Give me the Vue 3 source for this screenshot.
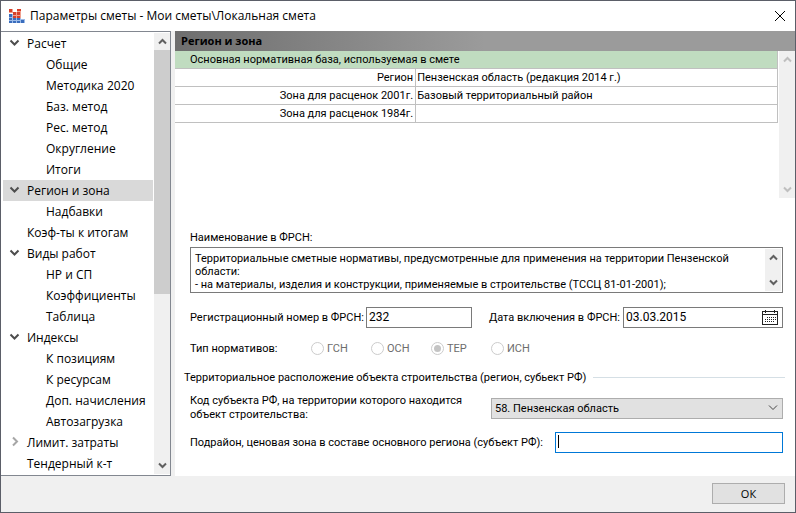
<script setup>
import { ref } from 'vue'

const tree = [
  { text: 'Расчет', level: 0, state: 'open' },
  { text: 'Общие', level: 1 },
  { text: 'Методика 2020', level: 1 },
  { text: 'Баз. метод', level: 1 },
  { text: 'Рес. метод', level: 1 },
  { text: 'Округление', level: 1 },
  { text: 'Итоги', level: 1 },
  { text: 'Регион и зона', level: 0, state: 'open' },
  { text: 'Надбавки', level: 1 },
  { text: 'Коэф-ты к итогам', level: 0 },
  { text: 'Виды работ', level: 0, state: 'open' },
  { text: 'НР и СП', level: 1 },
  { text: 'Коэффициенты', level: 1 },
  { text: 'Таблица', level: 1 },
  { text: 'Индексы', level: 0, state: 'open' },
  { text: 'К позициям', level: 1 },
  { text: 'К ресурсам', level: 1 },
  { text: 'Доп. начисления', level: 1 },
  { text: 'Автозагрузка', level: 1 },
  { text: 'Лимит. затраты', level: 0, state: 'closed' },
  { text: 'Тендерный к-т', level: 0 },
]
const current = ref('Регион и зона')

const rows = [
  ['Регион', 'Пензенская область (редакция 2014 г.)'],
  ['Зона для расценок 2001г.', 'Базовый территориальный район'],
  ['Зона для расценок 1984г.', ''],
]

const description = ref(
  'Территориальные сметные нормативы, предусмотренные для применения на территории Пензенской\nобласти:\n- на материалы, изделия и конструкции, применяемые в строительстве (ТССЦ 81-01-2001);'
)
const regNumber = ref('232')
const regDate = ref('03.03.2015')
const kinds = ['ГСН', 'ОСН', 'ТЕР', 'ИСН']
const kind = ref('ТЕР')
const subject = ref('58. Пензенская область')
const subregion = ref('')
</script>

<template>
  <div class="window">
    <header class="titlebar">
      <svg class="logo" viewBox="0 0 16 14" width="16" height="14" shape-rendering="crispEdges">
        <g fill="#f0a090">
          <rect x="0" y="0" width="4" height="4" /><rect x="8" y="0" width="4" height="3" />
          <rect x="4" y="3" width="8" height="6" />
        </g>
        <g fill="#d6402a">
          <rect x="0" y="0" width="3" height="3" /><rect x="8" y="0" width="4" height="2" />
          <rect x="4" y="3" width="3" height="3" /><rect x="8" y="3" width="3" height="3" />
          <rect x="4" y="7" width="3" height="2" /><rect x="8" y="7" width="3" height="2" />
        </g>
        <g fill="#9dbce8">
          <rect x="0" y="5" width="4" height="9" /><rect x="4" y="9" width="8" height="5" />
          <rect x="12" y="10" width="4" height="4" />
        </g>
        <g fill="#3a6dbd">
          <rect x="0" y="5" width="3" height="3" /><rect x="0" y="9" width="3" height="2" />
          <rect x="4" y="9" width="3" height="2" /><rect x="8" y="9" width="3" height="2" />
          <rect x="0" y="12" width="3" height="2" /><rect x="4" y="12" width="3" height="2" />
          <rect x="8" y="12" width="3" height="2" /><rect x="12" y="11" width="3" height="3" />
        </g>
      </svg>
      <h1>Параметры сметы - Мои сметы\Локальная смета</h1>
      <button class="close" type="button" aria-label="Закрыть">
        <svg viewBox="0 0 12 12" width="12" height="12"><path d="M1 1L11 11M11 1L1 11" /></svg>
      </button>
    </header>

    <div class="body">
      <nav class="sidebar">
        <ul>
          <li v-for="item in tree" :key="item.text">
            <button type="button" :class="{ child: item.level, selected: item.text === current }" @click="current = item.text">
              <span class="twist">
                <svg v-if="item.state === 'open'" viewBox="0 0 11 8" width="11" height="8"><path class="dark" d="M1.500 1.500L5.500 5.500L9.500 1.500" /></svg>
                <svg v-else-if="item.state === 'closed'" viewBox="0 0 8 11" width="8" height="11"><path class="pale" d="M2 1.500L6 5.500L2 9.500" /></svg>
              </span>
              <span>{{ item.text }}</span>
            </button>
          </li>
        </ul>
        <div class="scroll">
          <svg viewBox="0 0 9 7" width="9" height="7"><path d="M1 5.500L4.500 2L8 5.500" /></svg>
          <div class="track"><div class="thumb"></div></div>
          <svg viewBox="0 0 9 7" width="9" height="7"><path d="M1 1.500L4.500 5L8 1.500" /></svg>
        </div>
      </nav>

      <main class="panel">
        <h2>Регион и зона</h2>
        <div class="grid">
          <div class="table-wrap">
            <table>
              <colgroup><col class="name-col" /><col /></colgroup>
              <thead>
                <tr><th colspan="2" scope="colgroup">Основная нормативная база, используемая в смете</th></tr>
              </thead>
              <tbody>
                <tr v-for="row in rows" :key="row[0]">
                  <th scope="row">{{ row[0] }}</th>
                  <td>{{ row[1] }}</td>
                </tr>
              </tbody>
            </table>
          </div>
          <div class="scroll disabled">
            <svg viewBox="0 0 9 7" width="9" height="7"><path d="M1 5.500L4.500 2L8 5.500" /></svg>
            <div class="track"></div>
            <svg viewBox="0 0 9 7" width="9" height="7"><path d="M1 1.500L4.500 5L8 1.500" /></svg>
          </div>
        </div>

        <form class="form" @submit.prevent>
          <label for="descr">Наименование в ФРСН:</label>
          <div class="memo">
            <textarea id="descr" v-model="description" rows="3" spellcheck="false" readonly></textarea>
            <div class="scroll">
              <svg viewBox="0 0 9 7" width="9" height="7"><path d="M1 5.500L4.500 2L8 5.500" /></svg>
              <div class="track"></div>
              <svg viewBox="0 0 9 7" width="9" height="7"><path d="M1 1.500L4.500 5L8 1.500" /></svg>
            </div>
          </div>

          <div class="line reg">
            <label for="num">Регистрационный номер в ФРСН:</label>
            <input id="num" v-model="regNumber" class="field num" type="text" />
            <label class="date-label" for="date">Дата включения в ФРСН:</label>
            <div class="field date">
              <input id="date" v-model="regDate" type="text" />
              <button type="button" aria-label="Выбрать дату">
                <svg viewBox="0 0 16 15" width="16" height="15" shape-rendering="crispEdges">
                  <path class="frame" d="M0.500 1.500H15.500V14.500H0.500ZM0 4.500H16M3.500 0V3M12.500 0V3" />
                  <path class="days" d="M5 7.500H14M3 9.500H14M3 11.500H12" />
                </svg>
              </button>
            </div>
          </div>

          <fieldset class="kinds" disabled>
            <legend>Тип нормативов:</legend>
            <label v-for="k in kinds" :key="k">
              <input v-model="kind" type="radio" name="kind" :value="k" />{{ k }}
            </label>
          </fieldset>

          <h3>Территориальное расположение объекта строительства (регион, субьект РФ)</h3>

          <div class="line subject">
            <label for="subject">Код субъекта РФ, на территории которого находится<br />объект строительства:</label>
            <div class="combo">
              <select id="subject" v-model="subject"><option>58. Пензенская область</option></select>
              <svg viewBox="0 0 10 6" width="10" height="6"><path d="M1 0.500L5 4.500L9 0.500" /></svg>
            </div>
          </div>

          <div class="line subregion">
            <label for="sub">Подрайон, ценовая зона в составе основного региона (субъект РФ):</label>
            <div class="field active">
              <span class="caret"></span>
              <input id="sub" v-model="subregion" type="text" />
            </div>
          </div>
        </form>
      </main>
    </div>

    <footer class="footer"><button type="button">ОК</button></footer>
  </div>
</template>

<style>
body { background: #f0f0f0; }
</style>

<style scoped>
* { box-sizing: border-box; }
.window {
  --small: 11px;
  display: flex;
  flex-direction: column;
  min-height: 100vh;
  border: 1px solid #5b5e68;
  background: #f0f0f0;
  color: #000;
  font: 12px/16px "Open Sans", "Noto Sans", sans-serif;
}
h1, h2, h3, ul { margin: 0; padding: 0; }
button, input, select, textarea { font: inherit; color: inherit; margin: 0; border-radius: 0; }
svg { display: block; flex: none; }
path { fill: none; }

.titlebar { display: flex; align-items: center; height: 30px; padding: 0 8px; background: #fff; }
.titlebar h1 { flex: 1; margin-left: 5px; font-size: 12px; font-weight: 400; white-space: nowrap; }
.close { padding: 1px; border: 0; background: none; }
.close path { stroke: #000; stroke-width: 1; }

.body { flex: 1; display: flex; gap: 4px; }
.sidebar { display: flex; flex: none; width: 170px; padding: 1px 0 1px 2px; border: solid #828790; border-width: 1px 1px 1px 0; background: #fff; }
.sidebar ul { flex: 1; list-style: none; }
.sidebar button { display: flex; align-items: center; width: calc(100% - 1px); height: 21px; padding: 0; border: 0; background: none; white-space: nowrap; }
.sidebar .selected { background: #d9d9d9; }
.twist { display: flex; flex: none; justify-content: center; width: 24px; padding: 0 1px 2px 0; }
.child .twist { width: 43px; }
.dark { stroke: #4d4d4d; stroke-width: 2; }
.pale { stroke: #a6a6a6; stroke-width: 2; }

.scroll { display: flex; flex: none; flex-direction: column; align-items: center; width: 16px; padding: 5px 0; background: #f0f0f0; }
.scroll path { stroke: #606060; stroke-width: 2; }
.scroll.disabled path { stroke: #bfbfbf; }
.track { flex: 1; align-self: stretch; margin: 5px 0; }
.thumb { height: 60%; background: #cdcdcd; }

.panel { flex: 1; min-width: 0; background: #fff; font-family: Roboto, "DejaVu Sans Condensed", sans-serif; font-size: var(--small); line-height: 13px; }
.panel h2 { padding: 3px 6px; font-family: "Open Sans", "Noto Sans", sans-serif; font-size: var(--small); line-height: 14px; background: linear-gradient(90deg, #6e6e6e, #9b9b9b 50%); }
.grid { display: flex; height: 147px; }
.table-wrap { flex: 1; margin-right: 1px; }
table { width: 100%; border-collapse: separate; border-spacing: 0; table-layout: fixed; }
.name-col { width: 40%; }
th, td { height: 18px; padding: 0 1px; border: solid #c0c0c0; border-width: 0 1px 1px 0; font-weight: 400; text-align: left; white-space: nowrap; }
thead th { padding-left: 15px; background: #c0dcc0; }
tbody th { padding-right: 2px; text-align: right; }

.form { padding: 33px 10px 23px 9px; }
.form > label { display: block; margin-left: 6px; }
.memo { display: flex; margin: 3px 2px 0 6px; padding: 1px; border: 1px solid #7a7a7a; }
textarea { display: block; flex: 1; height: 42px; padding: 3px 3px 0; border: 0; outline: 0; resize: none; overflow: hidden; background: none; }
.line { display: flex; align-items: center; }
.reg { margin: 14px 2px 0 6px; }
.field { height: 21px; border: 1px solid #7a7a7a; background: #fff; font-size: 12px; outline: 0; }
.num { width: 106px; margin-left: 2px; padding: 0 2px 1px; }
.date-label { margin-left: auto; }
.date { display: flex; align-items: center; width: 160px; margin-left: 3px; padding-right: 4px; }
.field input { flex: 1; min-width: 0; padding: 0 2px 1px; border: 0; outline: 0; background: none; }
.date button { padding: 0; border: 0; background: none; }
.frame { stroke: #222; }
.days { stroke: #222; stroke-dasharray: 1 1; }

.kinds { display: flex; align-items: center; margin: 14px 0 0 6px; padding: 0; border: 0; }
.kinds legend { float: left; width: 121px; padding: 0; }
.kinds label { display: flex; align-items: center; gap: 3px; width: 60px; color: #6d6d6d; }
.kinds input { appearance: none; display: grid; place-items: center; width: 13px; height: 13px; border: 1px solid #ccc; border-radius: 50%; }
.kinds input:checked::before { content: ""; width: 7px; height: 7px; border-radius: 50%; background: #c4c4c4; }

h3 { display: flex; align-items: center; gap: 7px; margin-top: 16px; font-size: var(--small); font-weight: 400; white-space: nowrap; }
h3::after { content: ""; flex: 1; height: 1px; background: #d5dfe5; }
.subject { margin: 10px 2px 0 6px; }
.subject label { flex: 1; line-height: 14px; white-space: nowrap; }
.combo { display: flex; align-items: center; width: 292px; height: 21px; border: 1px solid #adadad; background: #e1e1e1; }
.combo select { appearance: none; flex: 1; height: 19px; padding: 0 3px; border: 0; outline: 0; background: none; }
.combo svg { margin-right: 4px; }
.combo path { stroke: #444; }
.subregion { margin: 10px 2px 0 6px; }
.subregion .field { position: relative; display: flex; flex: 1; margin-left: 12px; }
.field.active { border-color: #0078d7; }
.caret { position: absolute; left: 2px; top: 2px; width: 1px; height: 13px; background: #000; }

.footer { display: flex; justify-content: flex-end; padding: 7px 10px 8px; }
.footer button { width: 73px; height: 21px; padding: 0; border: 1px solid #adadad; background: #e1e1e1; font-size: var(--small); line-height: 19px; }
</style>
